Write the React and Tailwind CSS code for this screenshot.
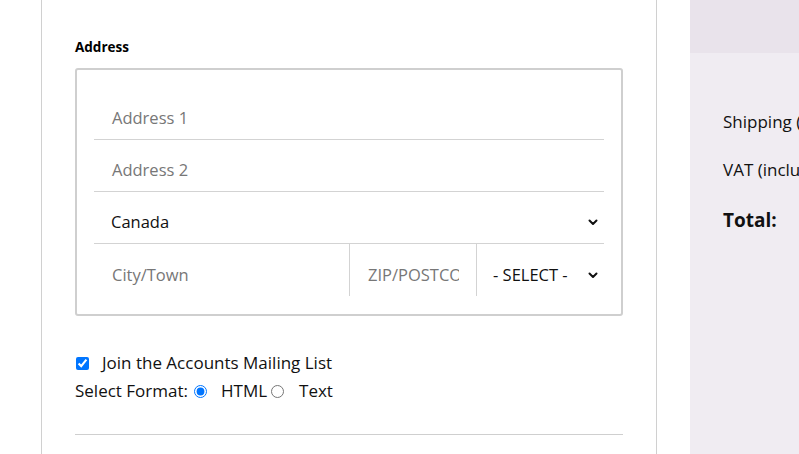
import React from "react";

function Chevron() {
  return (
    <svg width="10" height="7" viewBox="0 0 10 7" className="shrink-0">
      <path d="M1.5 1.5L5 5l3.5-3.5" fill="none" stroke="#111" strokeWidth="2" strokeLinecap="round" strokeLinejoin="round" />
    </svg>
  );
}

export default function App() {
  const font = { fontFamily: '"Open Sans", "Noto Sans", sans-serif' };
  return (
    <div className="w-[799px] h-[454px] overflow-hidden bg-white flex text-[#111]" style={font}>
      <div className="ml-[41px] w-[616px] shrink-0 border-l border-r border-[#d0d0d0] pl-[33px] pr-[33px] pt-[38px]">
        <div className="text-[13.5px] font-bold leading-[18px] text-black">Address</div>
        <div className="mt-[12px] border-2 border-[#cfcfcf] rounded-[3px] px-[17px] pt-[18px] pb-[18px]">
          <div className="h-[52px] border-b border-[#d3d3d3] flex items-center pt-[10px] pl-[18px] text-[16.5px] text-[#777]">Address 1</div>
          <div className="h-[52px] border-b border-[#d3d3d3] flex items-center pt-[10px] pl-[18px] text-[16.5px] text-[#777]">Address 2</div>
          <div className="h-[52px] border-b border-[#d3d3d3] flex items-center justify-between pt-[10px] pl-[17px] pr-[6px] text-[16.5px] text-[#111]">
            <span>Canada</span>
            <Chevron />
          </div>
          <div className="h-[52px] flex">
            <div className="w-[255px] flex items-center pt-[10px] pl-[18px] text-[16.5px] text-[#777]">City/Town</div>
            <div className="w-[127px] border-l border-[#d3d3d3] flex items-center pt-[10px] pl-[18px] text-[16.5px] text-[#777] overflow-hidden whitespace-nowrap">
              <span className="w-[91px] overflow-hidden block">ZIP/POSTCODE</span>
            </div>
            <div className="flex-1 border-l border-[#d3d3d3] flex items-center justify-between pt-[10px] pl-[16px] pr-[6px] text-[16.5px] text-[#111]">
              <span>- SELECT -</span>
              <Chevron />
            </div>
          </div>
        </div>
        <div className="mt-[36px] flex items-center h-[22px] text-[17px]">
          <input type="checkbox" defaultChecked className="w-[13px] h-[13px] m-0 ml-[1px] accent-[#0075ff]" />
          <span className="ml-[13px]">Join the Accounts Mailing List</span>
        </div>
        <div className="mt-[6px] flex items-center h-[22px] text-[17px]">
          <span>Select Format:</span>
          <input type="radio" name="fmt" defaultChecked className="w-[13px] h-[13px] m-0 ml-[6px] accent-[#0075ff]" />
          <span className="ml-[14px]">HTML</span>
          <input type="radio" name="fmt" className="w-[13px] h-[13px] m-0 ml-[4px]" />
          <span className="ml-[15px]">Text</span>
        </div>
        <div className="mt-[32px] border-t border-[#cfcfcf]"></div>
      </div>
      <div className="ml-[33px] flex-1 flex flex-col">
        <div className="h-[53px] bg-[#e9e3eb]"></div>
        <div className="flex-1 bg-[#f0ecf2] pl-[33px] pt-[57px] whitespace-nowrap text-[17px]">
          <div className="h-[24px] leading-[24px]">Shipping (inc. tax)</div>
          <div className="mt-[24px] h-[24px] leading-[24px]">VAT (included)</div>
          <div className="mt-[25px] text-[19px] font-bold leading-[26px]">Total:</div>
        </div>
      </div>
    </div>
  );
}
